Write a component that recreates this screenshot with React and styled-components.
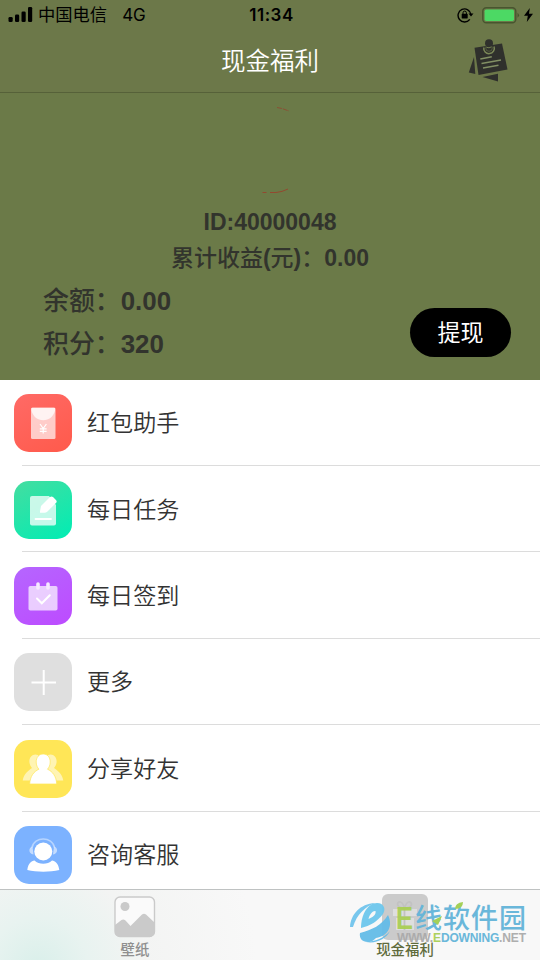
import React from 'react';
import styled, { createGlobalStyle } from 'styled-components';

const menuList = [
    { id: 'redpacket', title: '红包助手', bg: 'linear-gradient(150deg, #ff6a66, #ff5a4b)' },
    { id: 'task', title: '每日任务', bg: 'linear-gradient(150deg, #45dda0, #00edb4)' },
    { id: 'sign', title: '每日签到', bg: 'linear-gradient(150deg, #b566ff, #bd4bff)' },
    { id: 'more', title: '更多', bg: '#dfdfdf' },
    { id: 'share', title: '分享好友', bg: '#ffe657' },
    { id: 'service', title: '咨询客服', bg: '#7cb2ff' },
];

const MenuIcon = ({ id }) => {
    switch (id) {
        case 'redpacket':
            return (
                <svg viewBox="0 0 58 58">
                    <rect x="17" y="13.5" width="24.5" height="31.5" rx="1.5" fill="#fff" fillOpacity=".68" />
                    <path d="M17.5 14h23.5v2.5c-1.5 6-6 9.800-11.800 9.800S19 22.500 17.500 16.500z" fill="#fff" fillOpacity=".75" />
                    <path d="M26 30l3.200 4.500 3.200-4.500M29.200 34.500v5M25.800 34.800h6.800M25.800 37.300h6.800" fill="none" stroke="#fff" strokeWidth="1.200" />
                </svg>
            );
        case 'task':
            return (
                <svg viewBox="0 0 58 58">
                    <path d="M18 15h17l7 9v18.500a2 2 0 0 1-2 2H18a2 2 0 0 1-2-2V17a2 2 0 0 1 2-2z" fill="#fff" fillOpacity=".75" />
                    <path d="M26 30.500l1-5.500 9-9q1.500-1.200 3 0l3.200 3.200q1 1.300 0 2.500l-9 9q-1.200 1-2.700 1h-4.500z" fill="#fff" />
                    <path d="M21.500 38h15.500" stroke="#fff" strokeWidth="1.800" strokeLinecap="round" />
                </svg>
            );
        case 'sign':
            return (
                <svg viewBox="0 0 58 58">
                    <rect x="14.500" y="19" width="29" height="24.500" rx="1.800" fill="#fff" fillOpacity=".7" />
                    <path d="M24 17v4M34 17v4" stroke="#f6eaff" strokeWidth="3.600" strokeLinecap="round" />
                    <path d="M23 31.500l4.800 4.800 8-8" fill="none" stroke="#fff" strokeWidth="2" strokeLinecap="round" />
                </svg>
            );
        case 'more':
            return (
                <svg viewBox="0 0 58 58">
                    <path d="M29.700 17v25M17.500 29.500h24.500" stroke="#fff" strokeWidth="2" />
                </svg>
            );
        case 'share':
            return (
                <svg viewBox="0 0 58 58">
                    <g fill="#fff" fillOpacity=".55">
                        <path d="M24 15c-5-2-9 2-8.600 7 .2 3 1.700 5 2.600 6-4 3-8 5.500-9.300 12.500h8l8-11z" />
                        <path d="M34 15c5-2 9 2 8.600 7-.2 3-1.700 5-2.600 6 4 3 8 5.500 9.300 12.500h-8l-8-11z" />
                    </g>
                    <path d="M29.200 14c4.400 0 7 3.500 7 8 0 3-1.200 5.700-2.700 7.200 5 2.300 8.800 7 9.200 14.800H15.700c.4-7.800 4.200-12.500 9.200-14.800-1.500-1.500-2.700-4.200-2.700-7.200 0-4.500 2.600-8 7-8z" fill="#fff" stroke="#ffe657" strokeWidth=".7" />
                </svg>
            );
        default:
            return (
                <svg viewBox="0 0 58 58">
                    <path d="M18 21.500C20 10 38.500 10 40.500 21.500" fill="none" stroke="#fff" strokeOpacity=".45" strokeWidth="1.500" />
                    <path d="M18.500 20.500c-4 .5-4.500 7.500 1 8zM40 20.500c4 .5 4.500 7.500-1 8z" fill="#fff" fillOpacity=".55" />
                    <circle cx="29.300" cy="25.500" r="9" fill="#fff" />
                    <path d="M20.500 34.500c4.500 4.300 13 4.300 17.500 0 3.200.2 6.500 3 7.300 9.500-9.500 2.200-22.500 2.200-32 0 .8-6.500 4-9.300 7.200-9.500z" fill="#fff" />
                </svg>
            );
    }
};

const NoteIcon = () => (
    <svg width="42" height="44" viewBox="0 0 42 44">
        <path d="M6 19L.8 34.500l6.500 1.500zM14.500 39l15.500-3.300V43.500z" fill="#2f302c" />
        <path d="M6.500 9.800L34 5.500l5.500 26L10.500 37z" fill="#2f302c" />
        <path d="M15.800 9.500a5.300 5.300 0 1 0 10.200-1" fill="none" stroke="#7b8857" strokeWidth="1.500" />
        <circle cx="21" cy="10" r="3.300" fill="#2f302c" stroke="#6c7849" strokeWidth=".6" />
        <circle cx="21" cy="5.300" r="4" fill="#2f302c" />
        <path d="M18.500 9.300q2.500 1.200 5-.4" fill="none" stroke="#7b8857" strokeWidth=".9" />
        <path d="M12.300 21l11.500-2.300M13.500 25.500L33 22M15 30l15.500-2.800" stroke="#829064" strokeWidth="1.400" />
    </svg>
);

const Watermark = () => (
    <WatermarkBox>
        <svg width="182" height="60" viewBox="0 0 182 60">
            <path d="M0 27C1 14 10 4 25 3 15 7 7 14 3 27z" fill="#71c5ed" />
            <path d="M11 28C11 14 18 3 27 3c7 0 9 6 6 11-5 7-13 12-22 14z" fill="#6cc7ed" />
            <path d="M18.500 19c1-5 4.500-8.500 7-8 1 3.500-3 6.500-7 8z" fill="#f8f8f8" />
            <path d="M10 33c12-3 22-8 28-18 5 10 1 21-12 23-4 4-6 4-8 4-6 0-9-4-8-9z" fill="#63bce8" />
            <path d="M16 42c9-.5 18-4 24-11-4 8-14 13-24 11z" fill="#63bce8" />
            <text x="46" y="29" fontFamily="Liberation Sans" fontSize="32" fontWeight="700" fill="#a9cf54" textLength="17" lengthAdjust="spacingAndGlyphs">E</text>
            <text x="65" y="28" fontFamily="Noto Sans CJK SC, sans-serif" fontSize="27" fontWeight="500" fill="#62b4d9" textLength="111">线软件园</text>
            <path d="M105 9q0-6 8-7 0 7-8 7zM82 21l10-5-4 9z" fill="#9fce4d" />
            <text x="47" y="41.500" fontFamily="Liberation Sans" fontSize="12" fontWeight="700" fill="#aaa" textLength="129">
                WWW.<tspan fill="#a9cf54">E</tspan><tspan fill="#62b4d9">DOWNING</tspan>.NET
            </text>
        </svg>
    </WatermarkBox>
);

const App = () => {
    return (
        <Page>
            <GlobalStyle />
            <StatusBar>
                <Carrier>
                    <svg width="25" height="16" viewBox="0 0 25 16">
                        <rect x=".5" y="10" width="4.200" height="5" rx="1.300" />
                        <rect x="7" y="7.500" width="4.200" height="7.500" rx="1.300" />
                        <rect x="13.500" y="4.500" width="4.200" height="10.500" rx="1.300" />
                        <rect x="20" y="0" width="4.200" height="15" rx="1.300" />
                    </svg>
                    <span>中国电信</span>
                    <Network>4G</Network>
                </Carrier>
                <Clock>11:34</Clock>
                <Power>
                    <svg width="17" height="16" viewBox="0 0 17 16">
                        <path d="M12.800 12.300A6.500 6.500 0 1 1 14 7.500" fill="none" stroke="#000" strokeWidth="1.400" />
                        <path d="M11.500 6.500h5l-2.500 3z" />
                        <rect x="4.700" y="6.800" width="6" height="4.600" rx=".6" />
                        <path d="M6 7V5.800a1.700 1.700 0 0 1 3.400 0V7" fill="none" stroke="#000" strokeWidth="1" />
                    </svg>
                    <svg width="38" height="17" viewBox="0 0 38 17">
                        <rect x=".8" y=".8" width="33" height="15" rx="3.500" fill="none" stroke="#48552f" strokeWidth="1.400" />
                        <rect x="2.600" y="2.600" width="29.400" height="11.400" rx="1.700" fill="#4cd964" />
                        <path d="M35.500 5.800q3 2.500 0 5z" fill="#48552f" />
                    </svg>
                    <svg width="9" height="14" viewBox="0 0 9 14">
                        <path d="M5.800 0L0 7.800h3.800L2.800 14 9 5.700H5z" />
                    </svg>
                </Power>
            </StatusBar>
            <NavBar>
                <NavTitle>现金福利</NavTitle>
                <NoteIcon />
            </NavBar>
            <Profile>
                <Avatar>
                    <svg width="40" height="92" viewBox="0 0 40 92">
                        <path d="M17 1.500l5 1 7 2.500" fill="none" stroke="#8b5034" strokeWidth="1" strokeDasharray="5 1" />
                        <path d="M2.500 86.500h4M10 86.500h6q6-.5 12-3.500" fill="none" stroke="#93492f" strokeWidth="1" />
                    </svg>
                </Avatar>
                <ProfileText>ID:40000048</ProfileText>
                <ProfileText><Cjk>累计收益</Cjk>(<Cjk>元</Cjk>)<Cjk>：</Cjk>0.00</ProfileText>
                <Wallet>
                    <div>
                        <WalletText><Cjk>余额：</Cjk>0.00</WalletText>
                        <WalletText><Cjk>积分：</Cjk>320</WalletText>
                    </div>
                    <WithdrawButton>提现</WithdrawButton>
                </Wallet>
            </Profile>
            <MenuList>
                {menuList.map((menu) => (
                    <MenuItem key={menu.id}>
                        <IconBox $bg={menu.bg}><MenuIcon id={menu.id} /></IconBox>
                        <MenuTitle>{menu.title}</MenuTitle>
                    </MenuItem>
                ))}
            </MenuList>
            <TabBar>
                <Tab>
                    <svg width="42" height="42" viewBox="0 0 42 42">
                        <rect x="1" y="1" width="39.500" height="39.500" rx="5" fill="#fafafa" stroke="#cacaca" strokeWidth="1.400" />
                        <circle cx="11" cy="10.500" r="4.500" fill="#cacaca" />
                        <path d="M1 29l6.500-5q2-1.200 4 .6l5 5.400L28 18.500q2-1.700 4 0l8.500 8V36a5 5 0 0 1-5 5H6a5 5 0 0 1-5-5z" fill="#cacaca" />
                    </svg>
                    <span>壁纸</span>
                </Tab>
                <Tab $active>
                    <svg width="46" height="46" viewBox="0 0 46 46">
                        <rect width="46" height="46" rx="6" fill="#cbcbcb" />
                        <path d="M11 15h24v7H11zM14 24h18v12H14z" fill="#dedede" />
                        <path d="M22.500 15v21M22.500 14c-9 0-8-7-4-6 2 .5 3 3 4 6 1-3 2-5.500 4-6 4-1 5 6-4 6z" fill="none" stroke="#c2c2c2" strokeWidth="1.800" />
                    </svg>
                    <span>现金福利</span>
                </Tab>
                <Watermark />
            </TabBar>
        </Page>
    );
};

export default App;

const GlobalStyle = createGlobalStyle`
    * {
        box-sizing: border-box;
    }
    body {
        margin: 0;
        background-color: #fff;
        font-family: "Liberation Sans", "Noto Sans CJK SC", sans-serif;
    }
    svg {
        display: block;
        flex-shrink: 0;
    }
`;

const Page = styled.div`
    display: flex;
    flex-direction: column;
    width: 540px;
    height: 960px;
    overflow: hidden;
    background-color: #fff;
`;

const StatusBar = styled.header`
    display: grid;
    grid-template-columns: 1fr auto 1fr;
    align-items: center;
    height: 30px;
    padding: 0 7px 0 8px;
    background-color: #6c7849;
    color: #000;
    font-family: "Inter", "Noto Sans CJK SC", sans-serif;
    font-size: 17.3px;
    line-height: 30px;
`;

const Carrier = styled.div`
    display: flex;
    align-items: center;
    gap: 5px;
`;

const Network = styled.span`
    margin-left: 10px;
    font-size: 17px;
`;

const Clock = styled.div`
    padding-left: 2px;
    font-weight: 600;
    font-size: 17px;
    letter-spacing: .5px;
`;

const Power = styled.div`
    display: flex;
    align-items: center;
    justify-content: flex-end;
    gap: 8px;
    svg + svg + svg {
        margin-left: -4px;
    }
`;

const NavBar = styled.nav`
    display: grid;
    grid-template-columns: 1fr auto 1fr;
    align-items: center;
    height: 63px;
    padding: 0 30px;
    border-bottom: 1px solid #566139;
    background-color: #6c7849;
    svg {
        grid-column: 3;
        justify-self: end;
        margin-bottom: 2px;
    }
`;

const NavTitle = styled.h1`
    grid-column: 2;
    margin: 0 0 2px;
    color: #fff;
    font-family: "Noto Sans CJK SC", sans-serif;
    font-size: 24.5px;
    font-weight: 350;
    line-height: 60px;
`;

const Profile = styled.section`
    height: 287px;
    background-color: #6b7a48;
    color: #32342d;
    font-weight: 700;
`;

const Avatar = styled.div`
    display: flex;
    justify-content: center;
    height: 111px;
    padding-top: 13px;
    padding-left: 20px;
`;

const ProfileText = styled.p`
    margin: 0;
    font-size: 23px;
    line-height: 36px;
    text-align: center;
`;

const Cjk = styled.span`
    font-weight: 500;
`;

const Wallet = styled.div`
    display: flex;
    align-items: center;
    justify-content: space-between;
    margin-top: 4px;
    padding: 0 29px 0 43px;
`;

const WalletText = styled.p`
    margin: 0;
    font-size: 25.9px;
    line-height: 43px;
`;

const WithdrawButton = styled.button`
    width: 101px;
    height: 49px;
    margin-top: 19px;
    padding: 0 0 2px;
    border: 0;
    border-radius: 25px;
    background-color: #000;
    color: #fff;
    font-family: "Noto Sans CJK SC", sans-serif;
    font-size: 23px;
    line-height: 47px;
`;

const MenuList = styled.ul`
    height: 509px;
    margin: 0;
    padding: 0;
    overflow: hidden;
    list-style: none;
`;

const MenuItem = styled.li`
    display: flex;
    align-items: center;
    gap: 15px;
    height: 86.4px;
    padding-left: 14px;
    background: linear-gradient(#dcdcdc, #dcdcdc) 22px 100% / 100% 1.4px no-repeat;
`;

const IconBox = styled.div`
    width: 58px;
    height: 58px;
    border-radius: 15px;
    background: ${({ $bg }) => $bg};
`;

const MenuTitle = styled.span`
    margin-bottom: 4px;
    color: #333;
    font-family: "Noto Sans CJK SC", sans-serif;
    font-size: 23.1px;
    font-weight: 350;
    line-height: 40px;
`;

const TabBar = styled.footer`
    position: relative;
    display: grid;
    grid-template-columns: 1fr 1fr;
    height: 71px;
    border-top: 1px solid #bfc2c2;
    background: radial-gradient(circle at 38px 78px, #d9efea 0, #e8f3f0 50px, #f3f4f3 105px, rgba(248,248,248,0) 220px), #f8f8f8;
`;

const Tab = styled.div`
    display: flex;
    flex-direction: column;
    align-items: center;
    justify-content: flex-end;
    color: ${({ $active }) => ($active ? '#5f6b3b' : '#8f8f8f')};
    font-size: 14.4px;
    font-weight: 500;
    line-height: 20px;
    svg {
        margin-bottom: ${({ $active }) => ($active ? 0 : 2)}px;
    }
`;

const WatermarkBox = styled.div`
    position: absolute;
    top: 10px;
    left: 350px;
    opacity: .94;
`;
